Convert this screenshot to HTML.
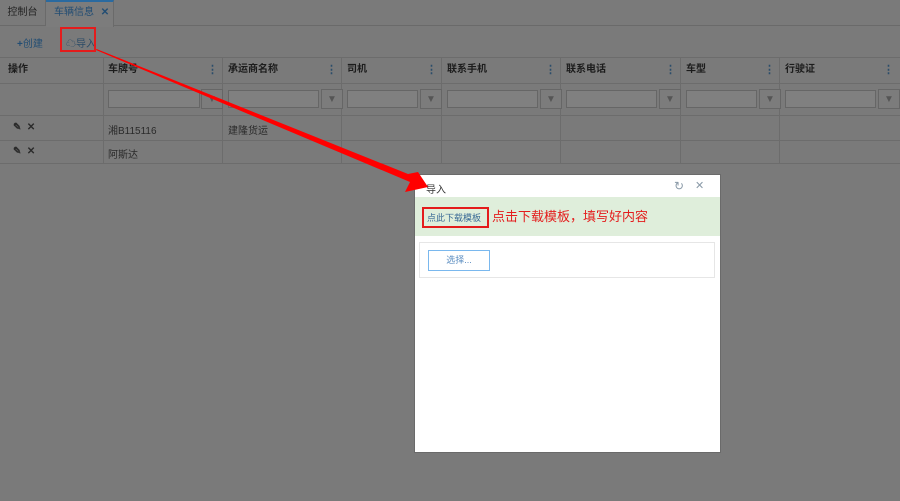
<!DOCTYPE html>
<html style="background:#7a7a7a"><head><meta charset="utf-8"><style>
*{margin:0;padding:0;box-sizing:border-box}
html,body{background:#7a7a7a}
body{width:900px;height:501px;font-family:"Liberation Sans","Noto Sans CJK SC",sans-serif;font-size:10px;color:#222;position:relative;overflow:hidden}
.abs{position:absolute}
.tabs{left:0;top:0;width:900px;height:26px;border-bottom:1px solid #6a6a6a;background:#7a7a7a}
.tab{top:0;height:26px;line-height:26px;font-size:10px}
.vl{position:absolute;width:1px;background:#6c6c6c}
.hl{position:absolute;height:1px;background:#6c6c6c;left:0;width:900px}
.th{top:57px;height:26px;line-height:26px;font-weight:bold;font-size:10px;color:#1c1c1c}
.dots{color:#2b4d6a;font-weight:bold;font-size:11px}
.inp{position:absolute;top:90px;height:18px;border:1px solid #666;background:#808080}
.fb{position:absolute;top:89px;width:22px;height:20px;border:1px solid #666;background:#7c7c7c;color:#555;text-align:center;line-height:19px;font-size:10px}
.cell{font-size:10px;color:#2a2a2a}
</style></head><body>
<div class="abs tabs"></div>
<div class="abs tab" style="left:0;width:46px;text-align:center;border-right:1px solid #6a6a6a">控制台</div>
<div class="abs" style="left:46px;top:0;width:68px;height:27px;background:#7c7c7c;border-right:1px solid #6a6a6a;border-top:2px solid #2a6aa0"></div>
<div class="abs tab" style="left:54px;color:#224d73">车辆信息 <b style="margin-left:4px">✕</b></div>
<div class="abs" style="left:17px;top:35px;color:#224d73;font-size:10px"><b>+</b>创建</div>
<div class="abs" style="left:66px;top:35px;color:#2a4a66;font-size:10px">☁导入</div>
<div class="abs" style="left:60px;top:27px;width:36px;height:25px;border:2px solid #e41c1c"></div>
<div class="hl" style="top:57px"></div>
<div class="hl" style="top:83px"></div>
<div class="hl" style="top:115px"></div>
<div class="hl" style="top:140px"></div>
<div class="hl" style="top:163px"></div>
<div class="vl" style="left:103px;top:57px;height:106px"></div>
<div class="vl" style="left:222px;top:57px;height:106px"></div>
<div class="vl" style="left:341px;top:57px;height:106px"></div>
<div class="vl" style="left:441px;top:57px;height:106px"></div>
<div class="vl" style="left:560px;top:57px;height:106px"></div>
<div class="vl" style="left:680px;top:57px;height:106px"></div>
<div class="vl" style="left:779px;top:57px;height:106px"></div>
<div class="abs th" style="left:8px">操作</div>
<div class="abs th" style="left:108px">车牌号</div><div class="abs th dots" style="left:207px">⋮</div>
<div class="abs th" style="left:228px">承运商名称</div><div class="abs th dots" style="left:326px">⋮</div>
<div class="abs th" style="left:347px">司机</div><div class="abs th dots" style="left:426px">⋮</div>
<div class="abs th" style="left:447px">联系手机</div><div class="abs th dots" style="left:545px">⋮</div>
<div class="abs th" style="left:566px">联系电话</div><div class="abs th dots" style="left:665px">⋮</div>
<div class="abs th" style="left:686px">车型</div><div class="abs th dots" style="left:764px">⋮</div>
<div class="abs th" style="left:785px">行驶证</div><div class="abs th dots" style="left:883px">⋮</div>
<div class="inp" style="left:108px;width:92px"></div><div class="fb" style="left:201px">▼</div>
<div class="inp" style="left:228px;width:91px"></div><div class="fb" style="left:321px">▼</div>
<div class="inp" style="left:347px;width:71px"></div><div class="fb" style="left:420px">▼</div>
<div class="inp" style="left:447px;width:91px"></div><div class="fb" style="left:540px">▼</div>
<div class="inp" style="left:566px;width:91px"></div><div class="fb" style="left:659px">▼</div>
<div class="inp" style="left:686px;width:71px"></div><div class="fb" style="left:759px">▼</div>
<div class="inp" style="left:785px;width:91px"></div><div class="fb" style="left:878px">▼</div>
<div class="abs cell" style="left:13px;top:122px;font-weight:bold">✎ &nbsp;✕</div>
<div class="abs cell" style="left:13px;top:146px;font-weight:bold">✎ &nbsp;✕</div>
<div class="abs cell" style="left:108px;top:122px">湘B115116</div>
<div class="abs cell" style="left:228px;top:122px">建隆货运</div>
<div class="abs cell" style="left:108px;top:146px">阿斯达</div>
<div class="abs" style="left:414px;top:174px;width:307px;height:279px;background:#fff;border:1px solid #6a6a6a"></div>
<div class="abs" style="left:426px;top:181px;font-size:10px;color:#333">导入</div>
<div class="abs" style="left:674px;top:179px;font-size:12px;color:#8a9aa8">↻</div>
<div class="abs" style="left:695px;top:179px;font-size:11px;color:#8a9aa8">✕</div>
<div class="abs" style="left:415px;top:197px;width:305px;height:39px;background:#dfeedb"></div>
<div class="abs" style="left:427px;top:211px;font-size:9px;color:#3a6a96">点此下载模板</div>
<div class="abs" style="left:422px;top:207px;width:67px;height:21px;border:2px solid #e41c1c"></div>
<div class="abs" style="left:492px;top:206px;font-size:13px;color:#e41c1c">点击下载模板，填写好内容</div>
<div class="abs" style="left:419px;top:242px;width:296px;height:36px;border:1px solid #e6e6e6"></div>
<div class="abs" style="left:428px;top:250px;width:62px;height:21px;border:1px solid #7ab8ee;color:#5a8cc0;font-size:9px;text-align:center;line-height:19px">选择...</div>
<svg class="abs" style="left:0;top:0" width="900" height="501">
<polygon points="96,50 96.5,49 408,174 418,172 428,187 405,192 410,182" fill="#ff0000"/>
</svg>
</body></html>
